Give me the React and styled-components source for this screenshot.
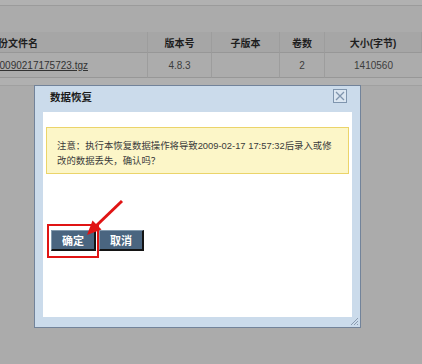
import styled, { createGlobalStyle } from "styled-components";

const GlobalStyle = createGlobalStyle`
  html, body {
    margin: 0;
    padding: 0;
  }
  body {
    background: #ababab;
    font-family: "Liberation Sans", "Noto Sans CJK SC", sans-serif;
    overflow: hidden;
  }
`;

const Page = styled.div`
  position: relative;
  width: 422px;
  height: 364px;
  overflow: hidden;
  background: #ababab;
`;

const TopStrip = styled.div`
  height: 5px;
  background: #b1b1b1;
  border-bottom: 1px solid #9b9b9b;
`;

const Spacer = styled.div`
  height: 26px;
`;

const Table = styled.div`
  display: grid;
  grid-template-columns: 168px 64px 68px 45px 1fr;
  margin-left: -20px;
`;

const Cell = styled.div`
  box-sizing: border-box;
  height: ${(p) => (p.$head ? "21px" : "25px")};
  display: flex;
  align-items: center;
  justify-content: ${(p) => (p.$left ? "flex-start" : "center")};
  padding-left: ${(p) => p.$indent || 0}px;
  background: ${(p) => (p.$head ? "#a6a6a6" : "#acacac")};
  border-bottom: 1px solid #979797;
  border-right: 1px solid #9d9d9d;
  font-family: "Liberation Sans", "Noto Sans CJK SC", sans-serif;
  font-size: 10px;
  font-weight: ${(p) => (p.$head ? 700 : 400)};
  color: ${(p) => (p.$head ? "#1e1e1e" : "#3c3c3c")};
  white-space: nowrap;
  &:last-child {
    border-right: none;
  }
`;

const FileLink = styled.span`
  text-decoration: underline;
  color: #333;
`;

const NextRow = styled.div`
  height: 7px;
  background: #b0b0b0;
  border-bottom: 1px solid #a0a0a0;
`;

const Modal = styled.div`
  position: absolute;
  left: 34px;
  top: 85px;
  width: 327px;
  height: 243px;
  box-sizing: border-box;
  border: 1px solid #72839a;
  background: #cbdbeb;
  display: flex;
  flex-direction: column;
  padding: 0 8px 10px 8px;
`;

const TitleBar = styled.div`
  height: 26px;
  box-sizing: border-box;
  display: flex;
  align-items: center;
  justify-content: space-between;
  padding: 0 5px 6px 7px;
`;

const Title = styled.span`
  font-family: "Noto Sans CJK SC", sans-serif;
  font-size: 10.5px;
  font-weight: 700;
  color: #1a1a1a;
`;

const CloseBox = styled.div`
  width: 14px;
  height: 14px;
  box-sizing: border-box;
  border: 1px solid #7f95ae;
  background: #dbe6f1;
  display: flex;
  align-items: center;
  justify-content: center;
`;

const Body = styled.div`
  flex: 1;
  background: #fff;
  padding: 15px 3px 0 3px;
`;

const Notice = styled.div`
  background: #fcf6c8;
  border: 1px solid #ebd46a;
  padding: 10px 10px 5px 10px;
  font-family: "Liberation Sans", "Noto Sans CJK SC", sans-serif;
  font-size: 9.4px;
  line-height: 15px;
  color: #3a3a3a;
`;

const ButtonRow = styled.div`
  display: flex;
  gap: 3px;
  margin-top: 56px;
  padding-left: 5px;
`;

const Button = styled.button`
  width: 45px;
  height: 21px;
  box-sizing: border-box;
  padding: 0;
  background: #4a6580;
  color: #fff;
  font-family: "Noto Sans CJK SC", sans-serif;
  font-size: 11px;
  font-weight: 700;
  border-top: 1px solid #8299ad;
  border-left: 1px solid #8299ad;
  border-right: 2px solid #141414;
  border-bottom: 2px solid #141414;
`;

const Grip = styled.svg`
  position: absolute;
  right: 1px;
  bottom: 1px;
`;

const Annotation = styled.svg`
  position: absolute;
  left: 0;
  top: 0;
  pointer-events: none;
`;

export default function App() {
  return (
    <Page>
      <GlobalStyle />
      <TopStrip />
      <Spacer />
      <Table>
        <Cell $head $left $indent={8}>备份文件名</Cell>
        <Cell $head>版本号</Cell>
        <Cell $head>子版本</Cell>
        <Cell $head>卷数</Cell>
        <Cell $head>大小(字节)</Cell>
        <Cell $left $indent={14}>
          <FileLink>20090217175723.tgz</FileLink>
        </Cell>
        <Cell>4.8.3</Cell>
        <Cell />
        <Cell>2</Cell>
        <Cell>1410560</Cell>
      </Table>
      <NextRow />

      <Modal>
        <TitleBar>
          <Title>数据恢复</Title>
          <CloseBox>
            <svg width="10" height="10" viewBox="0 0 10 10">
              <path d="M1 1 L9 9 M9 1 L1 9" stroke="#7f95ae" strokeWidth="1.3" />
            </svg>
          </CloseBox>
        </TitleBar>
        <Body>
          <Notice>
            注意：执行本恢复数据操作将导致2009-02-17 17:57:32后录入或修改的数据丢失，确认吗？
          </Notice>
          <ButtonRow>
            <Button>确定</Button>
            <Button>取消</Button>
          </ButtonRow>
        </Body>
        <Grip width="9" height="9" viewBox="0 0 9 9">
          <path d="M8 1 L1 8 M8 4 L4 8 M8 7 L7 8" stroke="#8a9bb0" strokeWidth="1" />
        </Grip>
      </Modal>

      <Annotation width="422" height="364" viewBox="0 0 422 364">
        <rect x="48" y="225" width="50" height="32" fill="none" stroke="#e01414" strokeWidth="2" />
        <line x1="122" y1="201" x2="97" y2="225" stroke="#e01414" strokeWidth="3" />
        <polygon points="87,235 101.5,229.5 92.5,220.5" fill="#e01414" />
      </Annotation>
    </Page>
  );
}
